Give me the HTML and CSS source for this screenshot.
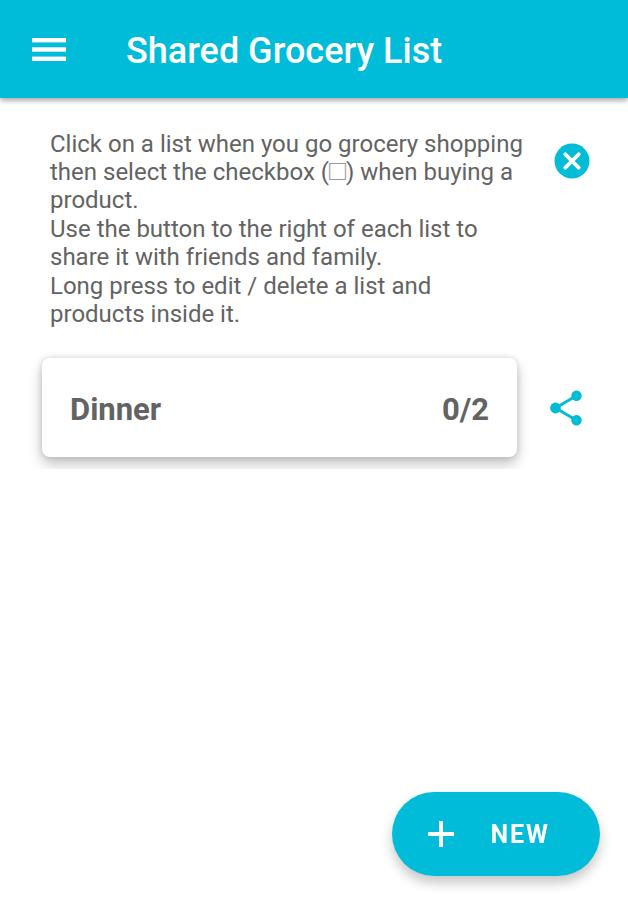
FILE: index.html
```html
<!DOCTYPE html>
<html lang="en">

<head>
  <meta charset="UTF-8">
  <meta name="viewport" content="width=device-width, initial-scale=1.0">
  <title>Shared Grocery List</title>
  <link rel="stylesheet" href="styles.css">
</head>

<body>
  <header class="app-bar">
    <button type="button" class="icon-button" aria-label="Menu">
      <svg width="34" height="26" viewBox="0 0 34 26" fill="currentColor">
        <rect y="0" width="34" height="4.4" />
        <rect y="9.3" width="34" height="4.4" />
        <rect y="18.6" width="34" height="4.4" />
      </svg>
    </button>
    <h1>Shared Grocery List</h1>
  </header>

  <main>
    <section class="hint">
      <div class="hint-text">
        <p>Click on a list when you go grocery shopping then select the checkbox (<span class="box">□</span>) when buying a product.</p>
        <p>Use the button to the right of each list to share it with friends and family.</p>
        <p>Long press to edit / delete a list and products inside it.</p>
      </div>
      <button type="button" class="icon-button close" aria-label="Close">
        <svg width="36" height="36" viewBox="0 0 36 36">
          <circle cx="18" cy="18" r="17.5" fill="currentColor" />
          <path d="M11.3 11.3L24.7 24.7M24.7 11.3L11.3 24.7" stroke="#fff" stroke-width="3.8" stroke-linecap="round" />
        </svg>
      </button>
    </section>

    <ul class="lists">
      <li>
        <button type="button" class="card">
          <span>Dinner</span>
          <span>0/2</span>
        </button>
        <button type="button" class="icon-button share" aria-label="Share">
          <svg width="32" height="36" viewBox="0 0 32 36" fill="currentColor">
            <path d="M26.5 5.7L5.5 18L26.5 30.3" fill="none" stroke="currentColor" stroke-width="2.8" />
            <circle cx="5.5" cy="18" r="5.4" />
            <circle cx="26.5" cy="5.7" r="5.2" />
            <circle cx="26.5" cy="30.3" r="5.2" />
          </svg>
        </button>
      </li>
    </ul>
  </main>

  <button type="button" class="new-button">
    <svg width="26" height="26" viewBox="0 0 26 26">
      <path d="M13 0V26M0 13H26" stroke="currentColor" stroke-width="4" />
    </svg>
    New
  </button>
</body>

</html>
```
FILE: styles.css
```css
* {
  box-sizing: border-box;
}

body {
  margin: 0;
  background: #fff;
  color: #636363;
  font-family: Roboto, "Liberation Sans", sans-serif;
}

button {
  padding: 0;
  border: none;
  background: none;
  color: inherit;
  font-family: inherit;
  cursor: pointer;
}

svg {
  display: block;
}

.app-bar {
  display: flex;
  align-items: center;
  gap: 60px;
  height: 98px;
  padding: 4px 32px 0;
  background: #00bcd9;
  color: #fff;
  box-shadow: 0 2px 6px rgba(0, 0, 0, 0.4);
}

h1 {
  margin: 0;
  font-size: 36px;
  font-weight: 500;
}

.icon-button {
  flex: none;
  color: #00bcd4;
}

.app-bar .icon-button {
  color: #fff;
}

.hint {
  display: flex;
  align-items: flex-start;
  gap: 24px;
  padding: 32px 38px 17px 50px;
}

.hint-text {
  flex: 1;
  font-size: 24px;
  line-height: 28px;
}

.hint-text p {
  margin: 0 0 1px;
}

.box {
  display: inline-block;
  color: #999;
  font-size: 28px;
  line-height: 24px;
}

.close {
  margin-top: 13px;
}

.lists {
  margin: 0;
  padding: 0 30px;
  list-style: none;
}

/* the row cuts off the card shadow */
.lists li {
  display: flex;
  align-items: center;
  padding: 12px;
  overflow: hidden;
}

.card {
  flex: 1;
  display: flex;
  justify-content: space-between;
  align-items: center;
  height: 99px;
  padding: 4px 28px 0;
  border-radius: 8px;
  background: #fff;
  font-size: 31px;
  font-weight: 700;
  box-shadow: 0 7px 14px rgba(0, 0, 0, 0.24), 0 0 6px rgba(0, 0, 0, 0.14);
}

.share {
  margin: 0 4px 0 33px;
}

.new-button {
  position: fixed;
  right: 28px;
  bottom: 24px;
  display: flex;
  align-items: center;
  gap: 36px;
  height: 84px;
  padding: 0 50px 0 36px;
  border-radius: 42px;
  background: #00bcd9;
  color: #fff;
  font-size: 25px;
  font-weight: 700;
  letter-spacing: 2px;
  text-transform: uppercase;
  box-shadow: 0 7px 12px rgba(0, 0, 0, 0.22);
}
```
